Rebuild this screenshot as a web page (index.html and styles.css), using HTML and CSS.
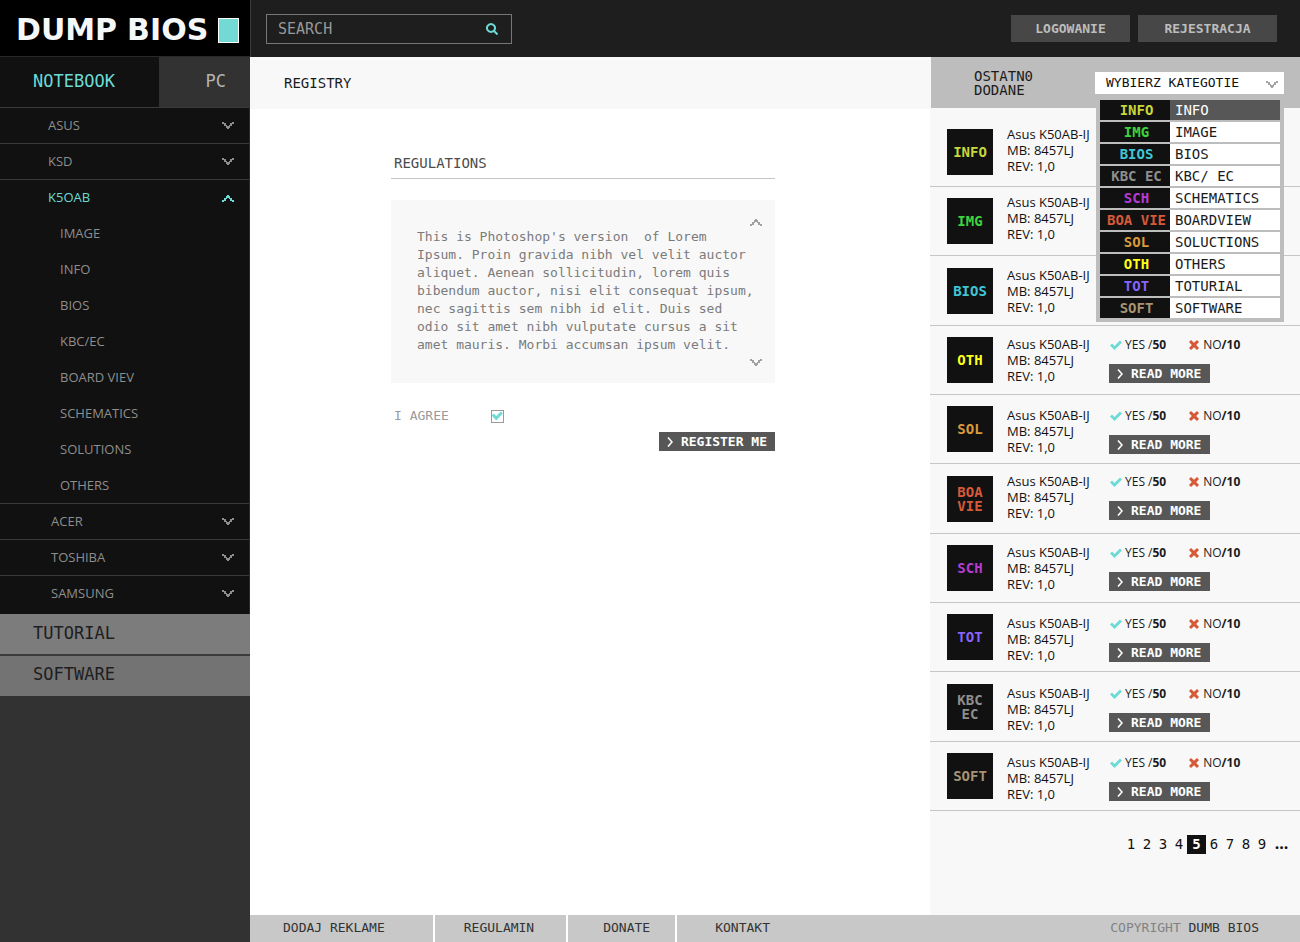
FILE: index.html
```
<!DOCTYPE html>
<html lang="pl">
<head>
<meta charset="utf-8">
<title>Dump Bios</title>
<link rel="stylesheet" href="styles.css">
</head>
<body>
<svg class="sprite" aria-hidden="true">
  <symbol id="chev" viewBox="0 0 12 8"><path d="M0 0h2v1h2v2h1v1h2v-1h1v-2h2v-1h2v2h-2v2h-2v2h-1v1h-2v-1h-1v-2h-2v-2h-2z"/></symbol>
  <symbol id="check" viewBox="0 0 12 10"><path d="M0 5.500 2 3.500 4.500 6 10 0.500 12 2.500 4.500 10z"/></symbol>
  <symbol id="cross" viewBox="0 0 10 10"><path d="M0 2 2 0 5 2.800 8 0 10 2 7.200 5 10 8 8 10 5 7.200 2 10 0 8 2.800 5z"/></symbol>
  <symbol id="gt" viewBox="0 0 6 10"><path d="M1 .5 5 5 1 9.500" fill="none" stroke="currentColor" stroke-width="1.600"/></symbol>
</svg>
<div class="page">
  <aside class="sidebar">
    <a class="logo" href="#"><span>DUMP</span><span>BIOS</span><i class="logo-square"></i></a>
    <nav>
      <div class="tabs"><a class="tab tab-on" href="#">NOTEBOOK</a><a class="tab tab-pc" href="#">PC</a></div>
      <ul class="menu">
        <li><a class="brand" href="#">ASUS<svg class="chev"><use href="#chev"/></svg></a></li>
        <li><a class="brand" href="#">KSD<svg class="chev"><use href="#chev"/></svg></a></li>
        <li><a class="brand brand-on" href="#">K5OAB<svg class="chev up"><use href="#chev"/></svg></a>
          <ul class="submenu">
            <li><a href="#">IMAGE</a></li>
            <li><a href="#">INFO</a></li>
            <li><a href="#">BIOS</a></li>
            <li><a href="#">KBC/EC</a></li>
            <li><a href="#">BOARD VIEV</a></li>
            <li><a href="#">SCHEMATICS</a></li>
            <li><a href="#">SOLUTIONS</a></li>
            <li><a href="#">OTHERS</a></li>
          </ul>
        </li>
        <li><a class="brand brand-in" href="#">ACER<svg class="chev"><use href="#chev"/></svg></a></li>
        <li><a class="brand brand-in" href="#">TOSHIBA<svg class="chev"><use href="#chev"/></svg></a></li>
        <li class="menu-end"><a class="brand brand-in" href="#">SAMSUNG<svg class="chev"><use href="#chev"/></svg></a></li>
      </ul>
      <a class="extra" href="#">TUTORIAL</a>
      <a class="extra extra-dark" href="#">SOFTWARE</a>
    </nav>
  </aside>

  <header class="topbar">
    <form class="search">
      <input type="search" placeholder="SEARCH" aria-label="Search">
      <button type="button" aria-label="Search"><svg width="12" height="12" viewBox="0 0 12 12"><path d="M8 8l3.500 3.500M5 1a4 4 0 1 0 .01 0z" fill="none" stroke="currentColor" stroke-width="2"/></svg></button>
    </form>
    <div class="account"><button type="button" class="login">LOGOWANIE</button><button type="button" class="signup">REJESTRACJA</button></div>
  </header>

  <main class="main">
    <h1>REGISTRY</h1>
    <form class="register">
      <h2>REGULATIONS</h2>
      <div class="terms">
        <p>This is Photoshop's version&nbsp; of Lorem<br>Ipsum. Proin gravida nibh vel velit auctor<br>aliquet. Aenean sollicitudin, lorem quis<br>bibendum auctor, nisi elit consequat ipsum,<br>nec sagittis sem nibh id elit. Duis sed<br>odio sit amet nibh vulputate cursus a sit<br>amet mauris. Morbi accumsan ipsum velit.</p>
        <div class="scroll"><button type="button" aria-label="Scroll up"><svg class="chev up"><use href="#chev"/></svg></button><button type="button" aria-label="Scroll down"><svg class="chev"><use href="#chev"/></svg></button></div>
      </div>
      <div class="agree"><label for="agree">I AGREE</label><input type="checkbox" id="agree" checked></div>
      <button type="button" class="action action-register"><svg class="gt"><use href="#gt"/></svg>REGISTER ME</button>
    </form>
  </main>

  <aside class="recent">
    <div class="recent-head">
      <h2>OSTATN0<br>DODANE</h2>
      <div class="picker">
        <select aria-label="Kategoria"><option>WYBIERZ KATEGOTIE</option></select>
        <svg class="chev"><use href="#chev"/></svg>
        <ul class="options">
          <li class="picked"><b class="info">INFO</b><a href="#">INFO</a></li>
          <li><b class="img">IMG</b><a href="#">IMAGE</a></li>
          <li><b class="bios">BIOS</b><a href="#">BIOS</a></li>
          <li><b class="kbc">KBC EC</b><a href="#">KBC/ EC</a></li>
          <li><b class="sch">SCH</b><a href="#">SCHEMATICS</a></li>
          <li><b class="boa">BOA VIE</b><a href="#">BOARDVIEW</a></li>
          <li><b class="sol">SOL</b><a href="#">SOLUCTIONS</a></li>
          <li><b class="oth">OTH</b><a href="#">OTHERS</a></li>
          <li><b class="tot">TOT</b><a href="#">TOTURIAL</a></li>
          <li><b class="soft">SOFT</b><a href="#">SOFTWARE</a></li>
        </ul>
      </div>
    </div>
    <ul class="entries" id="entries"></ul>
    <nav class="pages" aria-label="Pages"><a href="#">1</a><a href="#">2</a><a href="#">3</a><a href="#">4</a><a class="page-on" href="#">5</a><a href="#">6</a><a href="#">7</a><a href="#">8</a><a href="#">9</a><a class="page-more" href="#">...</a></nav>
  </aside>

  <footer class="footer">
    <nav><a href="#">DODAJ REKLAME</a><a href="#">REGULAMIN</a><a href="#">DONATE</a><a href="#">KONTAKT</a></nav>
    <p>COPYRIGHT <span>DUMB BIOS</span></p>
  </footer>
</div>
<script src="entries.js"></script>
</body>
</html>
```
FILE: entries.js
```
const entries = [
  ["INFO", "info", "high"], ["IMG", "img", "higher"], ["BIOS", "bios", ""],
  ["OTH", "oth", ""], ["SOL", "sol", "low"], ["BOA VIE", "boa", "high"],
  ["SCH", "sch", ""], ["TOT", "tot", "low"], ["KBC EC", "kbc", "low"], ["SOFT", "soft", "low"]
];
document.getElementById("entries").innerHTML = entries.map(([tag, color, level], i) => `
  <li class="entry ${level}">
    <b class="badge ${color}">${tag}</b>
    <p class="model">Asus K50AB-IJ<br>MB: 8457LJ<br>REV: 1,0</p>
    ${i < 3 ? "" : `<div class="votes">
      <p><span class="yes"><svg><use href="#check"/></svg>YES /<strong>50</strong></span><span class="no"><svg><use href="#cross"/></svg>NO<strong>/10</strong></span></p>
      <button type="button" class="action"><svg class="gt"><use href="#gt"/></svg>READ MORE</button>
    </div>`}
  </li>`).join("");
```
FILE: styles.css
```
* { box-sizing: border-box; margin: 0; padding: 0; }
ul { list-style: none; }
a { color: inherit; text-decoration: none; }
button, input, select { font: inherit; color: inherit; border: 0; border-radius: 0; background: none; appearance: none; }
svg { display: block; fill: currentColor; }
.sprite { display: none; }
body { font: 13px/18px "DejaVu Sans Mono", monospace; color: #1b1b1b; background: #fff; }

.page {
  display: grid;
  min-height: 100vh;
  grid-template: 57px 1fr 27px / 250px 1fr 370px;
  grid-template-areas: "side top top" "side main recent" "side foot foot";
}
.chev { width: 12px; height: 8px; color: #8e8e8e; }
.up { transform: rotate(180deg); }

.sidebar { grid-area: side; background: #323232; color: #8e8e8e; }
.logo { display: flex; align-items: center; height: 56px; padding: 4px 12px 0 16px; background: #000; color: #f4f8f8; font: bold 30px/40px "DejaVu Sans", sans-serif; gap: 10px; }
.logo-square { width: 21px; height: 25px; flex: none; background: #72d9d4; border: 1px solid #fff; }
.tabs { display: flex; height: 51px; border-top: 1px solid #282828; font-size: 17px; line-height: 48px; }
.tab { width: 159px; background: #111; padding-left: 33px; }
.tab-on { color: #6ddbd5; }
.tab-pc { flex: 1; width: auto; padding: 0 24px 0 0; text-align: right; background: #323232; color: #b5b5b5; }
.menu { font: 13px/35px "Open Sans", sans-serif; background: #111; border-right: 1px solid #2b2b2b; }
.brand { display: flex; align-items: center; justify-content: space-between; height: 36px; padding: 0 15px 0 48px; border-top: 1px solid #3a3a3a; }
.brand-in { padding-left: 51px; }
.brand-on { border-color: #3a3a3a; color: #6ddbd5; }
.brand-on .chev { color: #6ddbd5; }
.menu-end { padding-bottom: 3px; }
.submenu a { display: block; height: 36px; padding-left: 60px; line-height: 37px; }
.extra { display: block; height: 42px; padding-left: 33px; font-size: 17px; line-height: 39px; background: #7c7c7c; color: #1e1e1e; border-bottom: 2px solid #3c3c3c; }
.extra-dark { height: 40px; line-height: 36px; background: #737373; border-bottom: 0; }

.topbar { grid-area: top; display: flex; justify-content: space-between; align-items: flex-start; padding: 14px 23px 0 15px; background: #1e1e1e; border-left: 1px solid #3c3c3c; }
.search { display: flex; width: 246px; height: 30px; border: 1px solid #777; padding: 0 13px 0 11px; color: #989898; font-size: 15px; }
.search input { flex: 1; min-width: 0; outline: 0; }
.search input::placeholder { color: #989898; opacity: 1; }
.search button { color: #6ddbd5; }
.account { display: flex; gap: 8px; padding-top: 1px; color: #bdbdbd; }
.account button { height: 27px; background: #474747; font-weight: bold; }
.login { width: 119px; }
.signup { width: 139px; }

.main { grid-area: main; }
h1 { height: 52px; padding-left: 34px; background: #f8f8f8; font-weight: normal; font-size: 14px; line-height: 52px; }
.register { display: flex; flex-direction: column; width: 384px; margin: 44px auto 0 141px; }
h2 { font-weight: normal; font-size: 14px; }
.register h2 { height: 26px; padding-left: 3px; line-height: 20px; color: #4c4c4c; border-bottom: 1px solid #c4c4c4; }
.terms { display: flex; justify-content: space-between; height: 183px; margin-top: 21px; padding: 28px 0 0 26px; background: #f8f8f8; color: #7b7b7b; }
.terms p { white-space: nowrap; width: 325px; }
.scroll { display: flex; flex-direction: column; justify-content: space-between; margin: -10px 13px 16px 0; }
.scroll .chev { color: #a0a0a0; }
.agree { display: flex; align-items: center; gap: 42px; padding-left: 3px; margin-top: 24px; color: #9a9a9a; }
.agree input { display: grid; width: 13px; height: 13px; border: 1px solid #999; background: #fff; }
.agree input:checked::before { content: ""; background: #6ddbd5; clip-path: polygon(0 45%, 18% 28%, 40% 50%, 82% 8%, 100% 27%, 40% 92%); }
.action { display: flex; align-items: center; gap: 8px; height: 19px; padding: 0 8px; background: #575757; color: #fff; font-weight: bold; line-height: 18px; white-space: nowrap; }
.gt { width: 6px; height: 10px; }
.action-register { align-self: flex-end; margin-top: 7px; }

.recent { grid-area: recent; background: #f8f8f8; }
.recent-head { display: flex; justify-content: space-between; height: 51px; margin-left: 1px; padding: 0 16px 0 43px; background: #bdbdbd; }
.recent-head h2 { padding-top: 12px; line-height: 14px; }
.picker { position: relative; width: 189px; margin-top: 15px; }
.picker select { display: block; width: 100%; height: 22px; padding-left: 11px; background: #fff; color: #111; }
.picker > .chev { position: absolute; right: 6px; top: 9px; color: #a5a5a5; }
.options { position: absolute; z-index: 1; top: 22px; left: 1px; right: 0; display: grid; gap: 2px; padding: 6px 4px 4px; background: #bdbdbd; font-size: 14px; line-height: 20px; }
.options li { display: flex; height: 20px; background: #fff; }
.options b { width: 70px; padding-left: 3px; background: #111; text-align: center; white-space: nowrap; }
.options a { padding-left: 5px; }
.options .picked { background: #575757; color: #fff; }

.info { color: #c8d63c; } .img { color: #3dd43d; } .bios { color: #3fc6d6; } .kbc { color: #8e8e8e; }
.sch { color: #b63bd3; } .boa { color: #d75a38; } .sol { color: #d99a3a; } .oth { color: #ffff1a; }
.tot { color: #8763ff; } .soft { color: #a69373; }

.entry { display: flex; height: 69px; padding: 11px 0 0 17px; border-bottom: 1px solid #c6c6c6; }
.entry:nth-child(3n) { height: 70px; padding-top: 12px; }
.entry:first-child { height: 79px; padding-top: 21px; }
.badge { display: grid; place-items: center; width: 46px; height: 46px; padding: 0 4px; background: #111; font-size: 14px; line-height: 14px; text-align: center; }
.model { width: 116px; padding-left: 14px; margin-top: -1px; font: 13px/16px "Open Sans", sans-serif; color: #111; }
.votes { width: 150px; }
.votes p { display: flex; gap: 23px; font: 12px/16px "Open Sans", sans-serif; }
.votes span { display: flex; align-items: center; }
.votes p svg { width: 12px; height: 10px; margin: 0 3px 0 1px; color: #6ddbd5; }
.votes .no svg { width: 10px; margin: 0 4px 0 0; color: #d75a38; }
.votes .action { width: 101px; margin-top: 11px; }
.high .model { margin-top: -3px; }
.higher .model { margin-top: -4px; }
.high .votes { margin-top: -2px; }
.low .model { margin-top: 1px; }
.low .votes { margin-top: 2px; }

.pages { display: flex; justify-content: flex-end; padding: 24px 7px 0 0; line-height: 19px; font-size: 14px; }
.pages a { width: 16px; text-align: center; color: #111; }
.pages .page-on { width: 19px; background: #111; color: #fff; font-weight: bold; }
.pages .page-more { width: 23px; font: bold 16px/16px "Open Sans", sans-serif; text-align: center; }

.footer { grid-area: foot; display: flex; justify-content: space-between; padding-right: 41px; background: #c8c8c8; color: #333; line-height: 26px; }
.footer nav { display: flex; }
.footer nav a { padding: 0 32px 0 29px; border-left: 2px solid #fff; }
.footer nav a:first-child { padding: 0 48px 0 33px; border: 0; }
.footer nav a:nth-child(3) { padding: 0 25px 0 35px; }
.footer nav a:last-child { padding-left: 38px; }
.footer p { color: #828282; }
.footer span { color: #333; }
```
